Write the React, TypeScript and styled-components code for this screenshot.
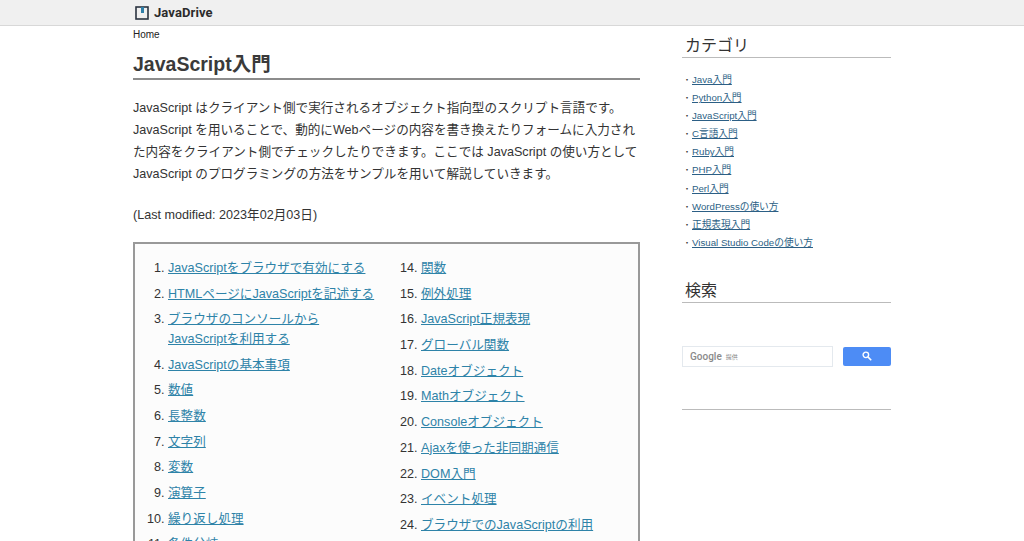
import React from 'react';
import styled, { createGlobalStyle } from 'styled-components';

const Global = createGlobalStyle`
  html, body { margin: 0; padding: 0; height: 541px; overflow: hidden; background: #fff; }
  body { font-family: "Liberation Sans", "Noto Sans CJK JP", sans-serif; color: #333; }
`;
const Header = styled.header`
  height: 25px; background: #f0f0f0; border-bottom: 1px solid #d8d8d8;
  padding-left: 135px; display: flex; align-items: center; gap: 5px; box-sizing: content-box;
`;
const Brand = styled.span`
  font: bold 13px "Roboto", "Liberation Sans", sans-serif; color: #2b2b2b; letter-spacing: 0.1px;
`;
const Page = styled.div`
  display: grid; grid-template-columns: 507px 209px; column-gap: 42px; padding-left: 133px;
`;
const Main = styled.main`display: flex; flex-direction: column;`;
const Crumb = styled.a`
  font-size: 10px; line-height: 14px; margin-top: 2px; color: #222; align-self: flex-start;
`;
const Title = styled.h1`
  margin: 9px 0 0; padding-bottom: 0; font-size: 19.5px; line-height: 27px; font-weight: bold;
  color: #3a3a3a; border-bottom: 2px solid #8c8c8c;
`;
const Lead = styled.p`
  margin: 17px 0 0; font-size: 12.6px; line-height: 22px; color: #333;
`;
const Modified = styled.p`
  margin: 19px 0 0; font-size: 12.6px; line-height: 22px; color: #333;
`;
const TocBox = styled.div`
  margin-top: 16px; border: 2px solid #999; background: #fcfcfc; height: 400px;
  padding: 15px 0 0; display: grid; grid-template-columns: 253px 1fr; box-sizing: border-box;
`;
const Toc = styled.ol`
  margin: 0; padding: 0 0 0 33px; font-size: 12.6px; line-height: 19.5px;
`;
const TocItem = styled.li`
  margin-bottom: 6.2px; color: #333;
`;
const TocLink = styled.a`
  color: #2e83a8; text-decoration: underline;
`;
const Side = styled.aside`display: flex; flex-direction: column;`;
const SideTitle = styled.h2<{ $top: number }>`
  margin: ${p => p.$top}px 0 0; padding: 0 0 0 3px; font-size: 16px; line-height: 22px; font-weight: normal;
  color: #333; border-bottom: 1px solid #bbb;
`;
const SideList = styled.ul`
  list-style: none; margin: 13px 0 0; padding: 0 0 0 1px;
`;
const SideItem = styled.li`
  font-size: 9.7px; height: 18.1px; line-height: 18px; color: #333; white-space: nowrap;
  &::before { content: "・"; display: inline-block; width: 9px; font-size: 8px; }
`;
const SideLink = styled.a`
  color: #2c5f85; text-decoration: underline;
`;
const SearchRow = styled.div`
  margin-top: 43px; display: flex; justify-content: space-between; align-items: center;
`;
const SearchInput = styled.div`
  width: 151px; height: 21px; box-sizing: border-box; border: 1px solid #e4e9ee; display: flex; align-items: center;
  gap: 4px; padding-left: 7px; background: #fff;
`;
const GoogleMark = styled.span`
  font: 500 10px "Roboto", sans-serif; color: #8a8a8a;
`;
const SearchHint = styled.span`
  font-size: 6px; color: #888;
`;
const SearchBtn = styled.button`
  width: 48px; height: 19px; border: none; border-radius: 2px; background: #4d8cf5; padding: 0;
  display: flex; align-items: center; justify-content: center;
`;
const Rule = styled.hr`
  margin: 42px 0 0; border: 0; border-top: 1px solid #bbb; width: 100%;
`;

const left = ['JavaScriptをブラウザで有効にする','HTMLページにJavaScriptを記述する','ブラウザのコンソールからJavaScriptを利用する','JavaScriptの基本事項','数値','長整数','文字列','変数','演算子','繰り返し処理','条件分岐'];
const right = ['関数','例外処理','JavaScript正規表現','グローバル関数','Dateオブジェクト','Mathオブジェクト','Consoleオブジェクト','Ajaxを使った非同期通信','DOM入門','イベント処理','ブラウザでのJavaScriptの利用'];
const cats = ['Java入門','Python入門','JavaScript入門','C言語入門','Ruby入門','PHP入門','Perl入門','WordPressの使い方','正規表現入門','Visual Studio Codeの使い方'];

export default function App() {
  return (
    <>
      <Global />
      <Header>
        <svg width="14" height="14" viewBox="0 0 14 14" aria-hidden="true">
          <rect x="1" y="1" width="12" height="12" fill="none" stroke="#2b3440" strokeWidth="1.6" />
          <rect x="6" y="1" width="3" height="6" fill="#2f7fa8" />
        </svg>
        <Brand>JavaDrive</Brand>
      </Header>
      <Page>
        <Main>
          <Crumb>Home</Crumb>
          <Title>JavaScript入門</Title>
          <Lead>JavaScript はクライアント側で実行されるオブジェクト指向型のスクリプト言語です。JavaScript を用いることで、動的にWebページの内容を書き換えたりフォームに入力された内容をクライアント側でチェックしたりできます。ここでは JavaScript の使い方として JavaScript のプログラミングの方法をサンプルを用いて解説していきます。</Lead>
          <Modified>(Last modified: 2023年02月03日)</Modified>
          <TocBox>
            <Toc>
              {left.map(t => (
                <TocItem key={t}><TocLink>{t === 'ブラウザのコンソールからJavaScriptを利用する' ? <>ブラウザのコンソールから<br />JavaScriptを利用する</> : t}</TocLink></TocItem>
              ))}
            </Toc>
            <Toc start={14}>
              {right.map(t => <TocItem key={t}><TocLink>{t}</TocLink></TocItem>)}
            </Toc>
          </TocBox>
        </Main>
        <Side>
          <SideTitle $top={9}>カテゴリ</SideTitle>
          <SideList>
            {cats.map(c => <SideItem key={c}><SideLink>{c}</SideLink></SideItem>)}
          </SideList>
          <SideTitle $top={28}>検索</SideTitle>
          <SearchRow>
            <SearchInput><GoogleMark>Google</GoogleMark><SearchHint>提供</SearchHint></SearchInput>
            <SearchBtn aria-label="検索">
              <svg width="10" height="10" viewBox="0 0 13 13" aria-hidden="true">
                <circle cx="5" cy="5" r="3.6" fill="none" stroke="#fff" strokeWidth="1.8" />
                <path d="M8 8l4 4" stroke="#fff" strokeWidth="2" />
              </svg>
            </SearchBtn>
          </SearchRow>
          <Rule />
        </Side>
      </Page>
    </>
  );
}
